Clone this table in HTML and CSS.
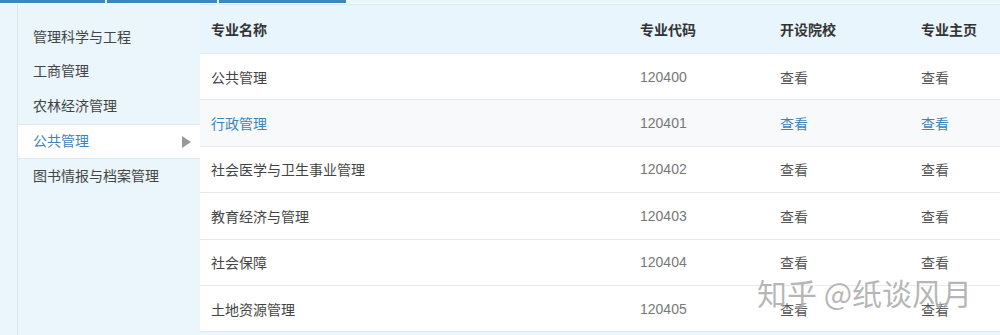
FILE: index.html
```html
<!DOCTYPE html>
<html lang="zh-CN">
<head>
<meta charset="utf-8">
<title>专业列表</title>
<link rel="stylesheet" href="styles.css">
</head>
<body>
<div class="tabs">
  <span class="tab t1"></span>
  <span class="tab t2"></span>
  <span class="tab t3"></span>
</div>
<div class="layout">
  <div class="strip"></div>
  <ul class="side">
    <li class="item">管理科学与工程</li>
    <li class="item">工商管理</li>
    <li class="item">农林经济管理</li>
    <li class="item active">公共管理<span class="arrow"></span></li>
    <li class="item">图书情报与档案管理</li>
  </ul>
  <div class="table">
    <div class="row head">
      <div class="cell">专业名称</div>
      <div class="cell">专业代码</div>
      <div class="cell">开设院校</div>
      <div class="cell">专业主页</div>
    </div>
    <div class="row">
      <div class="cell name">公共管理</div>
      <div class="cell code">120400</div>
      <div class="cell link">查看</div>
      <div class="cell link">查看</div>
    </div>
    <div class="row hover">
      <div class="cell name">行政管理</div>
      <div class="cell code">120401</div>
      <div class="cell link">查看</div>
      <div class="cell link">查看</div>
    </div>
    <div class="row">
      <div class="cell name">社会医学与卫生事业管理</div>
      <div class="cell code">120402</div>
      <div class="cell link">查看</div>
      <div class="cell link">查看</div>
    </div>
    <div class="row">
      <div class="cell name">教育经济与管理</div>
      <div class="cell code">120403</div>
      <div class="cell link">查看</div>
      <div class="cell link">查看</div>
    </div>
    <div class="row">
      <div class="cell name">社会保障</div>
      <div class="cell code">120404</div>
      <div class="cell link">查看</div>
      <div class="cell link">查看</div>
    </div>
    <div class="row">
      <div class="cell name">土地资源管理</div>
      <div class="cell code">120405</div>
      <div class="cell link">查看</div>
      <div class="cell link">查看</div>
    </div>
  </div>
</div>
<div class="watermark">知乎 @纸谈风月</div>
</body>
</html>
```

FILE: styles.css
```css
html, body {
  margin: 0;
  padding: 0;
}
body {
  width: 1000px;
  height: 335px;
  overflow: hidden;
  background: #eaf5fc;
  font-family: "Liberation Sans", "Noto Sans CJK SC", sans-serif;
  font-size: 14px;
  color: #444;
  position: relative;
}
.tabs {
  display: flex;
  gap: 2px;
  height: 3px;
  border-bottom: 1px solid #f4f9fd;
}
.tab {
  display: block;
  height: 3px;
  background: #3f87ba;
}
.t1 { width: 105px; }
.t2 { width: 110px; }
.t3 { width: 127px; }
.layout {
  display: flex;
  align-items: flex-start;
}
.strip {
  width: 17px;
  height: 331px;
  border-right: 1px solid #d7e6f0;
  flex: none;
}
.side {
  list-style: none;
  margin: 0;
  padding: 15.6px 0 0 0;
  width: 182px;
  flex: none;
}
.item {
  height: 34.75px;
  line-height: 34.75px;
  padding-left: 15px;
  color: #444;
  position: relative;
  box-sizing: border-box;
}
.item.active {
  background: #fff;
  color: #3d85b8;
  border-top: 1px solid #dfe9f1;
  border-bottom: 1px solid #dfe9f1;
  line-height: 32.75px;
}
.arrow {
  position: absolute;
  right: 9px;
  top: 11px;
  width: 0;
  height: 0;
  border-left: 9px solid #999;
  border-top: 6px solid transparent;
  border-bottom: 6px solid transparent;
}
.table {
  flex: 1;
  border-top: 1px solid #dde8ef;
}
.row {
  display: grid;
  grid-template-columns: 429px 140px 141px 1fr;
  height: 46.4px;
  align-items: center;
  background: #fff;
  border-bottom: 1px solid #e6eaee;
  box-sizing: border-box;
}
.row.head {
  height: 49px;
  background: #e9f5fd;
  font-weight: bold;
  color: #333;
}
.row.hover {
  background: #f7f9fb;
}
.row.hover .name,
.row.hover .link {
  color: #3d85b8;
}
.cell {
  padding-left: 11px;
  white-space: nowrap;
}
.name { color: #444; }
.code { color: #777; }
.link { color: #555; }
.watermark {
  position: absolute;
  left: 757px;
  top: 274px;
  font-family: "Noto Sans CJK SC", sans-serif;
  font-size: 30px;
  line-height: 36px;
  color: rgba(110, 110, 110, 0.5);
  text-shadow: 0 0 2px rgba(255, 255, 255, 0.9);
  white-space: nowrap;
}
```
